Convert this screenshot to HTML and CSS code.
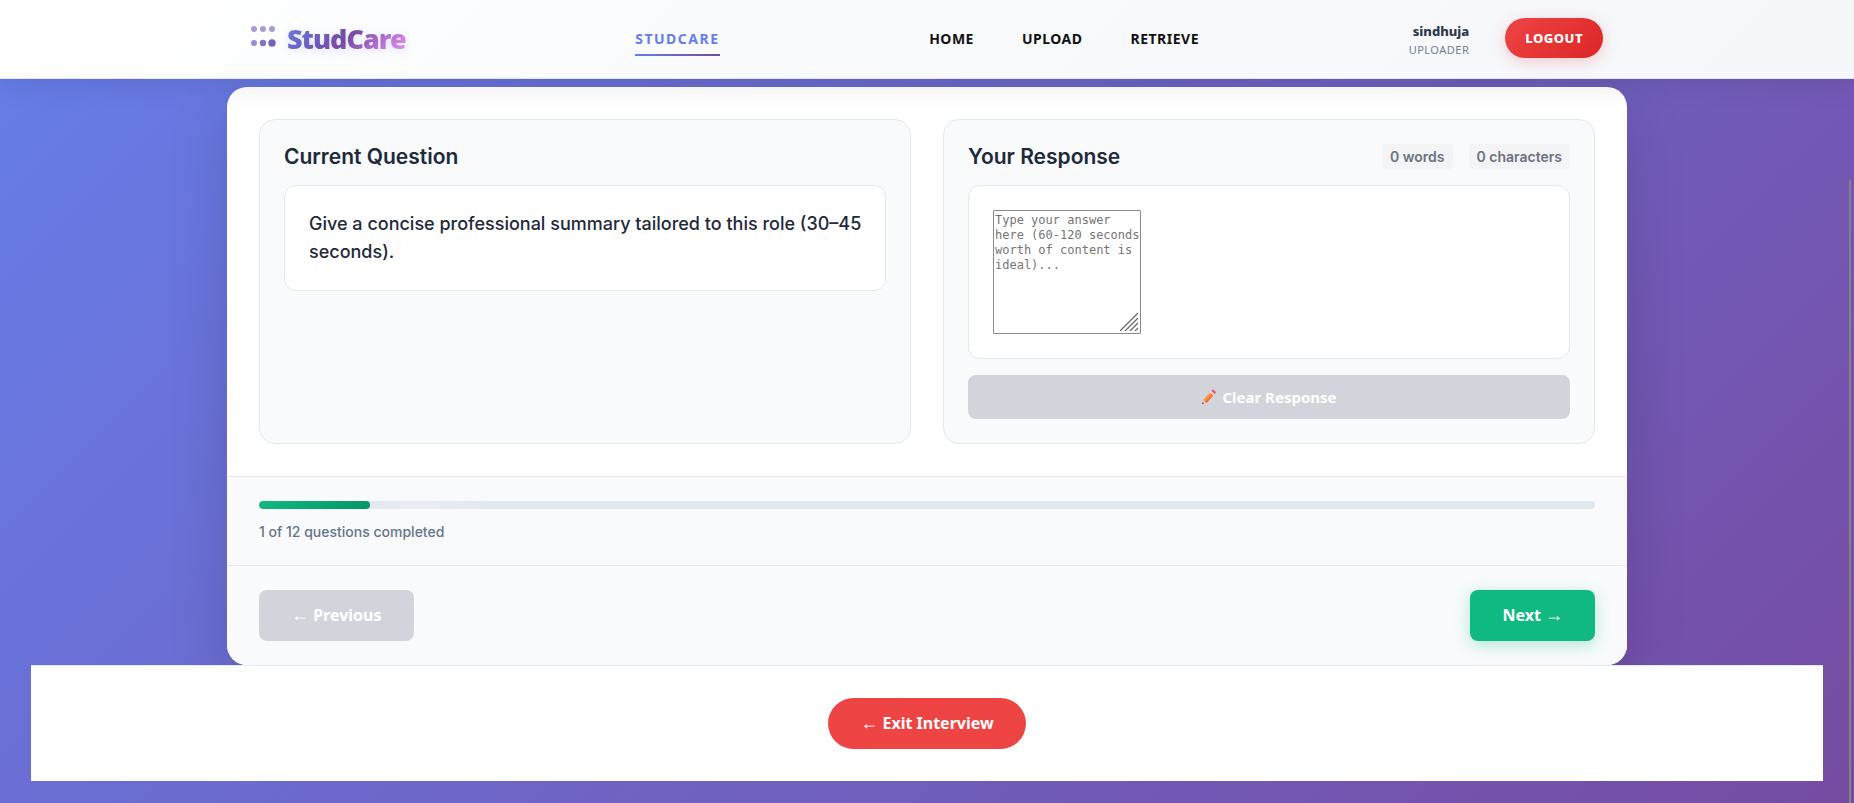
FILE: index.html
```html
<!DOCTYPE html>
<html lang="en">
<head>
<meta charset="utf-8">
<meta name="viewport" content="width=device-width, initial-scale=1">
<title>StudCare</title>
<link rel="stylesheet" href="styles.css">
</head>
<body>
<header class="header">
  <div class="header-inner">
    <a class="logo" href="#">
      <svg class="logo-dots" width="28" height="30" viewBox="0 0 28 30" aria-hidden="true">
        <g fill="#7355b5" opacity=".58"><circle cx="3" cy="6" r="3"/><circle cx="12" cy="6" r="3"/><circle cx="21" cy="6" r="3"/></g>
        <circle cx="3" cy="20" r="3" fill="#6659c4" opacity=".68"/>
        <circle cx="12" cy="20" r="3.2" fill="#6a53bc" opacity=".82"/>
        <circle cx="21" cy="20" r="3.7" fill="#6c4fb5" opacity=".92"/>
      </svg>
      <span class="logo-text">StudCare</span>
    </a>
    <a class="brand-link" href="#">STUDCARE</a>
    <nav class="nav">
      <a href="#">HOME</a>
      <a href="#">UPLOAD</a>
      <a href="#">RETRIEVE</a>
    </nav>
    <div class="account">
      <div class="user">
        <span class="user-name">sindhuja</span>
        <span class="user-role">UPLOADER</span>
      </div>
      <button class="logout" type="button">LOGOUT</button>
    </div>
  </div>
</header>
<main class="page">
  <div class="card">
    <div class="panels">
      <section class="panel">
        <div class="panel-head"><h2>Current Question</h2></div>
        <div class="box question-box"><p class="question">Give a concise professional summary tailored to this role (30–45 seconds).</p></div>
      </section>
      <section class="panel">
        <div class="panel-head">
          <h2><label for="answer">Your Response</label></h2>
          <div class="counts"><span>0 words</span><span>0 characters</span></div>
        </div>
        <div class="box">
          <div class="answer-wrap">
            <textarea id="answer" class="answer" placeholder="Type your answer here (60-120 seconds worth of content is ideal)..."></textarea>
            <svg class="grip" width="18" height="18" viewBox="0 0 18 18" aria-hidden="true">
              <path d="M0 18L18 0M5 18L18 5M10 18L18 10M15 18l3-3" stroke="#6b6b6b" stroke-width="1.300" fill="none"/>
            </svg>
          </div>
        </div>
        <button class="btn clear" type="button" disabled>
          <svg width="16" height="16" viewBox="0 0 16 16" aria-hidden="true">
            <path d="M1 15l1.500-4L5.400 13.500z" fill="#fac0a0"/>
            <path d="M1 15l.6-2L3 14.400z" fill="#433b6b"/>
            <path d="M2.300 10.800L9 3.500l3.300 3L5.500 14z" fill="#ff9440"/>
            <path d="M4 12.300L10.800 5.100l1.500 1.400L5.500 14z" fill="#f5703a"/>
            <path d="M9 3.500l1.400-1.500 3.300 3-1.400 1.500z" fill="#d9d5e6"/>
            <path d="M10.400 2l.8-.9c.5-.5 1-.5 1.500-.1l1.800 1.600c.5.500.5 1 .1 1.500l-.9.900z" fill="#f8545c"/>
          </svg>
          <span>Clear Response</span>
        </button>
      </section>
    </div>
    <section class="progress">
      <div class="track" role="progressbar" aria-valuemin="0" aria-valuemax="12" aria-valuenow="1" aria-labelledby="progress-text">
        <div class="fill" style="width:8.33%"></div>
      </div>
      <p class="progress-text" id="progress-text">1 of 12 questions completed</p>
    </section>
    <div class="controls">
      <button class="btn previous" type="button" disabled><span class="arrow">←</span> Previous</button>
      <button class="btn next" type="button">Next <span class="arrow">→</span></button>
    </div>
  </div>
  <footer class="exit-bar">
    <button class="btn exit" type="button"><span class="arrow">←</span> Exit Interview</button>
  </footer>
</main>
<div class="scroll-mark" aria-hidden="true"></div>
</body>
</html>
```
FILE: styles.css
```css
* { box-sizing: border-box; }
body {
  margin: 0;
  min-height: 100vh;
  background: linear-gradient(135deg, #667eea 0%, #764ba2 100%);
  font-family: Inter, "Liberation Sans", sans-serif;
  color: #1e293b;
}
a { color: inherit; text-decoration: none; }
button { border: 0; font-family: "Noto Sans", "Open Sans", sans-serif; cursor: pointer; }
h2, p { margin: 0; }

.header {
  position: sticky;
  top: 0;
  z-index: 2;
  background: linear-gradient(135deg, #ffffff 0%, #f8fafd 50%, #f5f7fb 100%);
  border-bottom: 1px solid #e3e4ee;
  box-shadow: 0 4px 30px rgba(0, 0, 0, .1);
  font-family: "Noto Sans", "Open Sans", sans-serif;
}
.header-inner {
  display: flex;
  align-items: center;
  justify-content: space-between;
  height: 78px;
  max-width: 1400px;
  margin: 0 auto;
  padding: 0 24px 2px;
}
.logo { display: flex; align-items: center; gap: 8px; padding-right: 20px; }
.logo-dots { display: block; }
.logo-text {
  padding-top: 2px;
  font-size: 27px;
  font-weight: 900;
  line-height: 36px;
  letter-spacing: -1px;
  background: linear-gradient(135deg, #667eea 0%, #764ba2 50%, #f093fb 100%);
  -webkit-background-clip: text;
  background-clip: text;
  color: transparent;
  filter: drop-shadow(0 2px 4px rgba(102, 126, 234, .2));
}
.brand-link {
  position: relative;
  color: #667eea;
  font-size: 14px;
  font-weight: 700;
  letter-spacing: 1.5px;
}
.brand-link::after {
  content: "";
  position: absolute;
  left: 0;
  right: 0;
  bottom: -8px;
  height: 2px;
  background: linear-gradient(90deg, #667eea, #764ba2);
}
.nav { display: flex; gap: 48px; color: #111; font-size: 14px; font-weight: 700; letter-spacing: .5px; }
.account { display: flex; align-items: center; gap: 36px; }
.user { display: flex; flex-direction: column; align-items: flex-end; padding-top: 4px; }
.user-name { color: #2d3748; font-size: 13px; font-weight: 800; line-height: 19px; }
.user-role { color: #718096; font-size: 11px; line-height: 18px; letter-spacing: .5px; }
.logout {
  height: 40px;
  padding: 0 20px;
  border-radius: 20px;
  background: linear-gradient(135deg, #ef4444, #dc2626);
  box-shadow: 0 4px 15px rgba(239, 68, 68, .25);
  color: #fff;
  font-size: 13px;
  font-weight: 800;
  letter-spacing: .5px;
}

.page { padding: 8px 31px 22px; }
.card {
  max-width: 1400px;
  margin: 0 auto;
  overflow: hidden;
  border-radius: 20px;
  background: #fff;
  box-shadow: 0 20px 60px rgba(0, 0, 0, .15);
}
.panels { display: grid; grid-template-columns: 1fr 1fr; gap: 32px; padding: 32px; }
.panel {
  padding: 24px;
  border: 1px solid #e2e8f0;
  border-radius: 16px;
  background: #f8fafc;
}
.panel-head {
  display: flex;
  align-items: center;
  justify-content: space-between;
  height: 25px;
  margin-bottom: 16px;
}
.panel h2 { font-size: 21px; font-weight: 600; line-height: 25px; }
.counts { display: flex; gap: 16px; color: #6b7280; font-size: 14px; font-weight: 600; line-height: 17px; }
.counts span { padding: 4px 8px; border-radius: 4px; background: #f3f4f6; }
.box { padding: 24px; border: 1px solid #e2e8f0; border-radius: 12px; background: #fff; }
.question-box { padding-right: 16px; }
.question { font-size: 18px; font-weight: 500; line-height: 28px; }
.answer-wrap { position: relative; width: 148px; }
.answer {
  display: block;
  width: 100%;
  height: 124px;
  padding: 2px 0 2px 1px;
  border: 1px solid #8a8a94;
  border-radius: 1px;
  background: #fff;
  font-family: "DejaVu Sans Mono", monospace;
  font-size: 12px;
  line-height: 15px;
  resize: none;
}
.answer::placeholder { color: #757575; }
.grip { position: absolute; right: 3px; bottom: 3px; pointer-events: none; }
.btn { border-radius: 8px; color: #fff; font-size: 16px; font-weight: 700; line-height: 19px; padding: 16px 32px; }
.btn:disabled { background: #d1d5db; cursor: default; }
.arrow { font-family: "Liberation Sans", sans-serif; font-size: 18px; font-weight: 400; line-height: 1; }
.clear {
  display: flex;
  align-items: center;
  justify-content: center;
  gap: 5px;
  width: 100%;
  margin-top: 16px;
}
.btn.clear { padding: 12px; font-size: 15px; line-height: 20px; }
.progress { padding: 24px 32px 22px; border-top: 1px solid #e2e8f0; background: #f8fafc; }
.track {
  height: 8px;
  overflow: hidden;
  border-radius: 4px;
  background: linear-gradient(90deg, #e2e8f0 8%, #e9edf3 12%, #e2e8f0 17%);
}
.fill { height: 100%; border-radius: 4px; background: linear-gradient(135deg, #10b981, #059669); }
.progress-text { margin-top: 12px; color: #64748b; font-size: 14px; font-weight: 500; line-height: 22px; }
.controls {
  display: flex;
  justify-content: space-between;
  padding: 24px 32px;
  border-top: 1px solid #e2e8f0;
  background: #f8fafc;
}
.next { background: #10b981; box-shadow: 0 4px 15px rgba(16, 185, 129, .3); }
.exit-bar {
  position: relative;
  display: flex;
  justify-content: center;
  padding: 32px;
  border-top: 1px solid #e2e8f0;
  background: #fff;
}
.exit { border-radius: 26px; background: #ef4444; }
.scroll-mark { position: fixed; top: 180px; right: 3px; bottom: 0; width: 2px; background: #838383; }
```
